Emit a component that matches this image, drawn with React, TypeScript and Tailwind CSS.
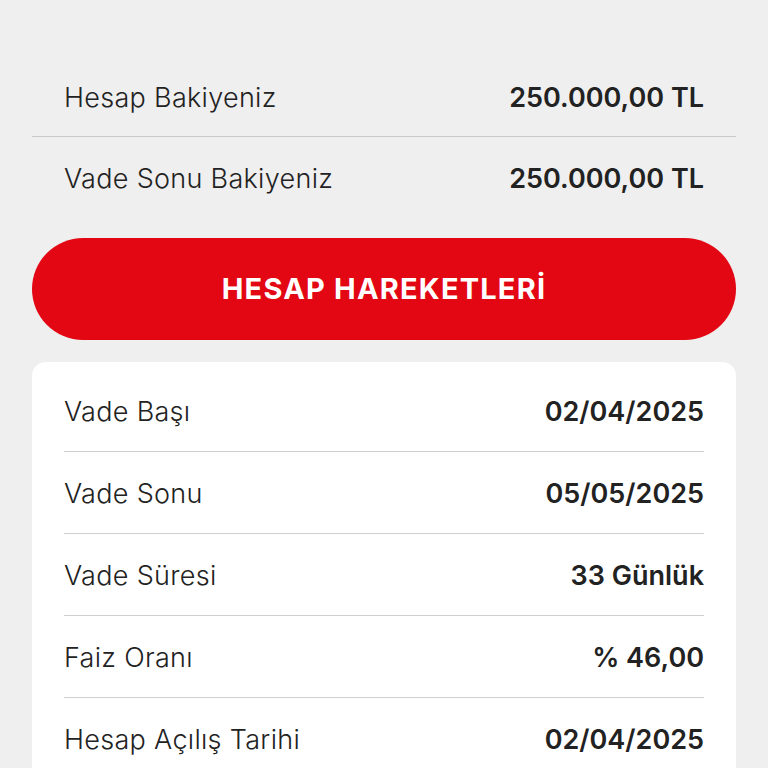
const summary = [
  { label: 'Hesap Bakiyeniz', value: '250.000,00 TL' },
  { label: 'Vade Sonu Bakiyeniz', value: '250.000,00 TL' },
];

const details = [
  { label: 'Vade Başı', value: '02/04/2025' },
  { label: 'Vade Sonu', value: '05/05/2025' },
  { label: 'Vade Süresi', value: '33 Günlük' },
  { label: 'Faiz Oranı', value: '% 46,00' },
  { label: 'Hesap Açılış Tarihi', value: '02/04/2025' },
];

export default function App() {
  return (
    <div className="h-[768px] overflow-hidden bg-[#efefef] px-8 pt-[56px] font-['Inter',sans-serif] text-[#222]">
      {/* Balances */}
      <div>
        {summary.map((row, i) => (
          <div
            key={row.label}
            className={`flex items-center justify-between px-8 pt-1 h-[81px] ${i === 0 ? 'border-b border-[#c9c9c9]' : ''}`}
          >
            <span className="text-[27px] font-light tracking-[0.3px]">{row.label}</span>
            <span className="text-[27px] font-semibold">{row.value}</span>
          </div>
        ))}
      </div>

      <button className="mt-5 flex h-[102px] w-full items-center justify-center rounded-full bg-[#e30613] text-[29px] font-bold tracking-[1.2px] text-white">
        HESAP HAREKETLERİ
      </button>

      {/* Details card */}
      <div className="mt-[22px] h-[420px] rounded-[14px] bg-white px-8 pt-2">
        {details.map((row) => (
          <div
            key={row.label}
            className="flex h-[82px] items-center justify-between border-b border-[#cfcfcf] pt-1"
          >
            <span className="text-[27px] font-light tracking-[0.3px]">{row.label}</span>
            <span className="text-[27px] font-semibold">{row.value}</span>
          </div>
        ))}
      </div>
    </div>
  );
}
